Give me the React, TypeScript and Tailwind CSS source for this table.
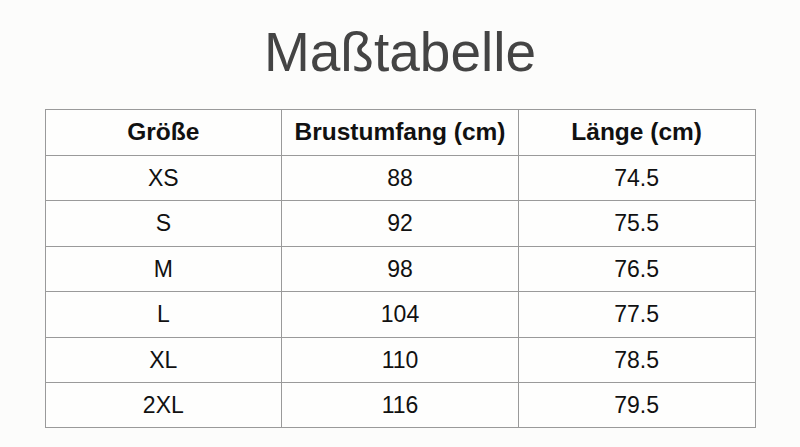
const rows = [
  ["XS", "88", "74.5"],
  ["S", "92", "75.5"],
  ["M", "98", "76.5"],
  ["L", "104", "77.5"],
  ["XL", "110", "78.5"],
  ["2XL", "116", "79.5"],
];

const App = () => {
  return (
    <div
      className="w-[800px] h-[447px] bg-[#fcfcfb] flex flex-col items-center overflow-hidden"
      style={{ fontFamily: '"Liberation Sans", Arial, sans-serif' }}
    >
      <h1 className="mt-[21px] h-[62px] text-[55px] leading-[62px] text-[#444444]">Maßtabelle</h1>
      <table className="mt-[26px] w-[711px] border-collapse table-fixed text-[#111111] text-[23px] bg-[#fefefd]">
        <thead>
          <tr className="h-[46px] text-[24.5px]">
            <th className="border border-[#9a9a9a] font-bold">Größe</th>
            <th className="border border-[#9a9a9a] font-bold">Brustumfang (cm)</th>
            <th className="border border-[#9a9a9a] font-bold">Länge (cm)</th>
          </tr>
        </thead>
        <tbody>
          {rows.map((r) => (
            <tr key={r[0]} className="h-[45.4px]">
              {r.map((c, i) => (
                <td key={i} className="border border-[#9a9a9a] text-center">
                  {c}
                </td>
              ))}
            </tr>
          ))}
        </tbody>
      </table>
    </div>
  );
};

export default App;
